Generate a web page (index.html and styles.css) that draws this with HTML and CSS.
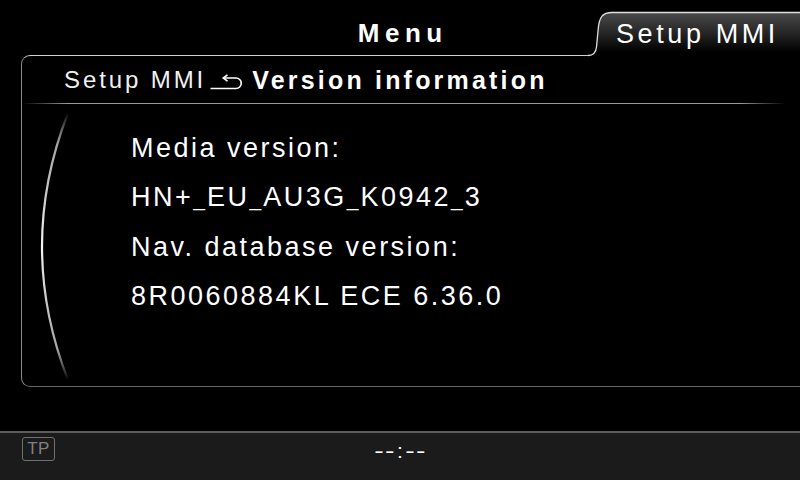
FILE: index.html
```html
<!DOCTYPE html>
<html lang="en">
<head>
<meta charset="utf-8">
<title>Version information</title>
<link rel="stylesheet" href="styles.css">
</head>
<body>
<div class="screen">
  <header class="topbar">
    <div class="topbar-side"></div>
    <div class="menu-title">Menu</div>
    <div class="topbar-side topbar-right">
      <div class="tab">
        <svg class="tab-shape" width="212" height="46" viewBox="0 0 212 46">
          <defs>
            <linearGradient id="tabfill" x1="0" y1="0" x2="0" y2="1">
              <stop offset="0" stop-color="#4a4a4a"/>
              <stop offset="0.45" stop-color="#262626"/>
              <stop offset="0.9" stop-color="#000"/>
              <stop offset="1" stop-color="#000"/>
            </linearGradient>
          </defs>
          <path d="M0 44.5 C6 44.5 8 41 8.5 36 L10 20 C11 5 15 1.5 24 1.5 L212 1.5 L212 46 L0 46 Z" fill="url(#tabfill)"/>
          <path d="M0 44.5 C6 44.5 8 41 8.5 36 L10 20 C11 5 15 1.5 24 1.5 L212 1.5" fill="none" stroke="#e0e0e0" stroke-width="1.3"/>
        </svg>
        <span class="tab-label">Setup MMI</span>
      </div>
    </div>
  </header>

  <section class="panel">
    <div class="crumbs">
      <span class="crumb-parent">Setup MMI</span>
      <svg class="back-icon" width="32" height="16" viewBox="0 0 32 16">
        <path d="M0.5 14.5 H26 A5.25 5.25 0 0 0 26 4 H14" fill="none" stroke="#fff" stroke-width="1.6"/>
        <path d="M17.5 0.8 L13.2 4 L17.5 7.2" fill="none" stroke="#fff" stroke-width="1.6"/>
      </svg>
      <span class="crumb-current">Version information</span>
    </div>
    <div class="separator"></div>
    <div class="content">
      <svg class="arc" width="50" height="282" viewBox="0 0 50 282">
        <defs>
          <linearGradient id="arcg" x1="0" y1="0" x2="0" y2="1">
            <stop offset="0" stop-color="#fff" stop-opacity="0"/>
            <stop offset="0.12" stop-color="#c4c4c4" stop-opacity="0.85"/>
            <stop offset="0.5" stop-color="#f4f4f4"/>
            <stop offset="0.88" stop-color="#c4c4c4" stop-opacity="0.85"/>
            <stop offset="1" stop-color="#fff" stop-opacity="0"/>
          </linearGradient>
        </defs>
        <path d="M46 9 Q-6 142.5 46 276" fill="none" stroke="url(#arcg)" stroke-width="2.2"/>
      </svg>
      <div class="info">
        <div class="info-line">Media version:</div>
        <div class="info-line">HN+<span class="us">_</span>EU<span class="us">_</span>AU3G<span class="us">_</span>K0942<span class="us">_</span>3</div>
        <div class="info-line">Nav. database version:</div>
        <div class="info-line">8R0060884KL ECE 6.36.0</div>
      </div>
    </div>
  </section>

  <div class="gap"></div>

  <footer class="statusbar">
    <span class="tp-badge">TP</span>
    <span class="clock"><span class="clock-part">--</span><span class="clock-sep">:</span><span class="clock-part">--</span></span>
  </footer>
</div>
</body>
</html>
```

FILE: styles.css
```css
* { box-sizing: border-box; }

html, body {
  margin: 0;
  padding: 0;
  background: #000;
}

body {
  width: 800px;
  height: 480px;
  overflow: hidden;
  font-family: "Liberation Sans", Arial, sans-serif;
  color: #fff;
}

.screen {
  width: 800px;
  height: 480px;
  display: flex;
  flex-direction: column;
  overflow: hidden;
}

/* ---------- top bar ---------- */
.topbar {
  height: 57px;
  flex: none;
  display: grid;
  grid-template-columns: 1fr auto 1fr;
  position: relative;
  z-index: 2;
}

.menu-title {
  margin-top: 18px;
  font-size: 26px;
  line-height: 30px;
  font-weight: bold;
  letter-spacing: 5.5px;
  margin-right: -5.5px;
  height: 30px;
}

.topbar-right {
  display: flex;
  justify-content: flex-end;
  align-items: flex-end;
}

.tab {
  position: relative;
  width: 212px;
  height: 46px;
  padding: 8px 0 0 28px;
}

.tab-shape {
  position: absolute;
  left: 0;
  top: 0;
  display: block;
}

.tab-label {
  position: relative;
  display: block;
  font-size: 27px;
  line-height: 30px;
  letter-spacing: 3.6px;
  white-space: nowrap;
}

/* ---------- panel ---------- */
.panel {
  flex: none;
  margin-top: -2px;
  margin-left: 21px;
  width: 800px;
  height: 332px;
  border-top: 1px solid #cfcfcf;
  border-left: 1px solid #8c8c8c;
  border-bottom: 1px solid #6a6a6a;
  border-radius: 9px 0 0 9px;
  display: flex;
  flex-direction: column;
  position: relative;
  z-index: 1;
}

.crumbs {
  height: 47px;
  padding: 10px 0 0 42px;
  display: flex;
  align-items: flex-start;
  white-space: nowrap;
}

.crumb-parent {
  font-size: 24px;
  line-height: 28px;
  letter-spacing: 2.9px;
  color: #f0f0f0;
}

.back-icon {
  margin: 8px 0 0 4px;
  display: block;
  flex: none;
}

.crumb-current {
  margin-left: 10px;
  font-size: 25px;
  line-height: 28px;
  font-weight: bold;
  letter-spacing: 3.2px;
}

.separator {
  height: 1px;
  width: 764px;
  flex: none;
  background: linear-gradient(to right,
    rgba(170,170,170,0) 0%,
    rgba(170,170,170,0.9) 6%,
    rgba(170,170,170,0.9) 94%,
    rgba(170,170,170,0) 100%);
}

.content {
  flex: 1;
  display: flex;
  align-items: flex-start;
}

.arc {
  display: block;
  flex: none;
}

.info {
  padding: 20px 0 0 59px;
}

.info-line {
  font-size: 27px;
  line-height: 49px;
  letter-spacing: 2.5px;
  white-space: nowrap;
}

.us {
  font-size: 21px;
  letter-spacing: 2px;
}

/* ---------- bottom ---------- */
.gap {
  flex: 1;
}

.statusbar {
  flex: none;
  height: 49px;
  border-top: 2px solid #5c5c5c;
  background: #1b1b1b;
  display: flex;
  align-items: flex-start;
  position: relative;
}

.tp-badge {
  margin: 4px 0 0 22px;
  width: 33px;
  height: 24px;
  border: 1px solid #707070;
  border-radius: 3px;
  color: #808080;
  font-size: 17px;
  line-height: 22px;
  text-align: center;
  letter-spacing: 0.5px;
  display: block;
}

.clock {
  position: absolute;
  left: 0;
  right: 0;
  top: 6px;
  display: flex;
  justify-content: center;
  font-size: 21px;
  line-height: 24px;
}

.clock-part {
  letter-spacing: 1px;
  margin-right: -1px;
  transform: scaleX(1.35);
  display: inline-block;
}

.clock-sep {
  margin: 0 5px;
}
```
